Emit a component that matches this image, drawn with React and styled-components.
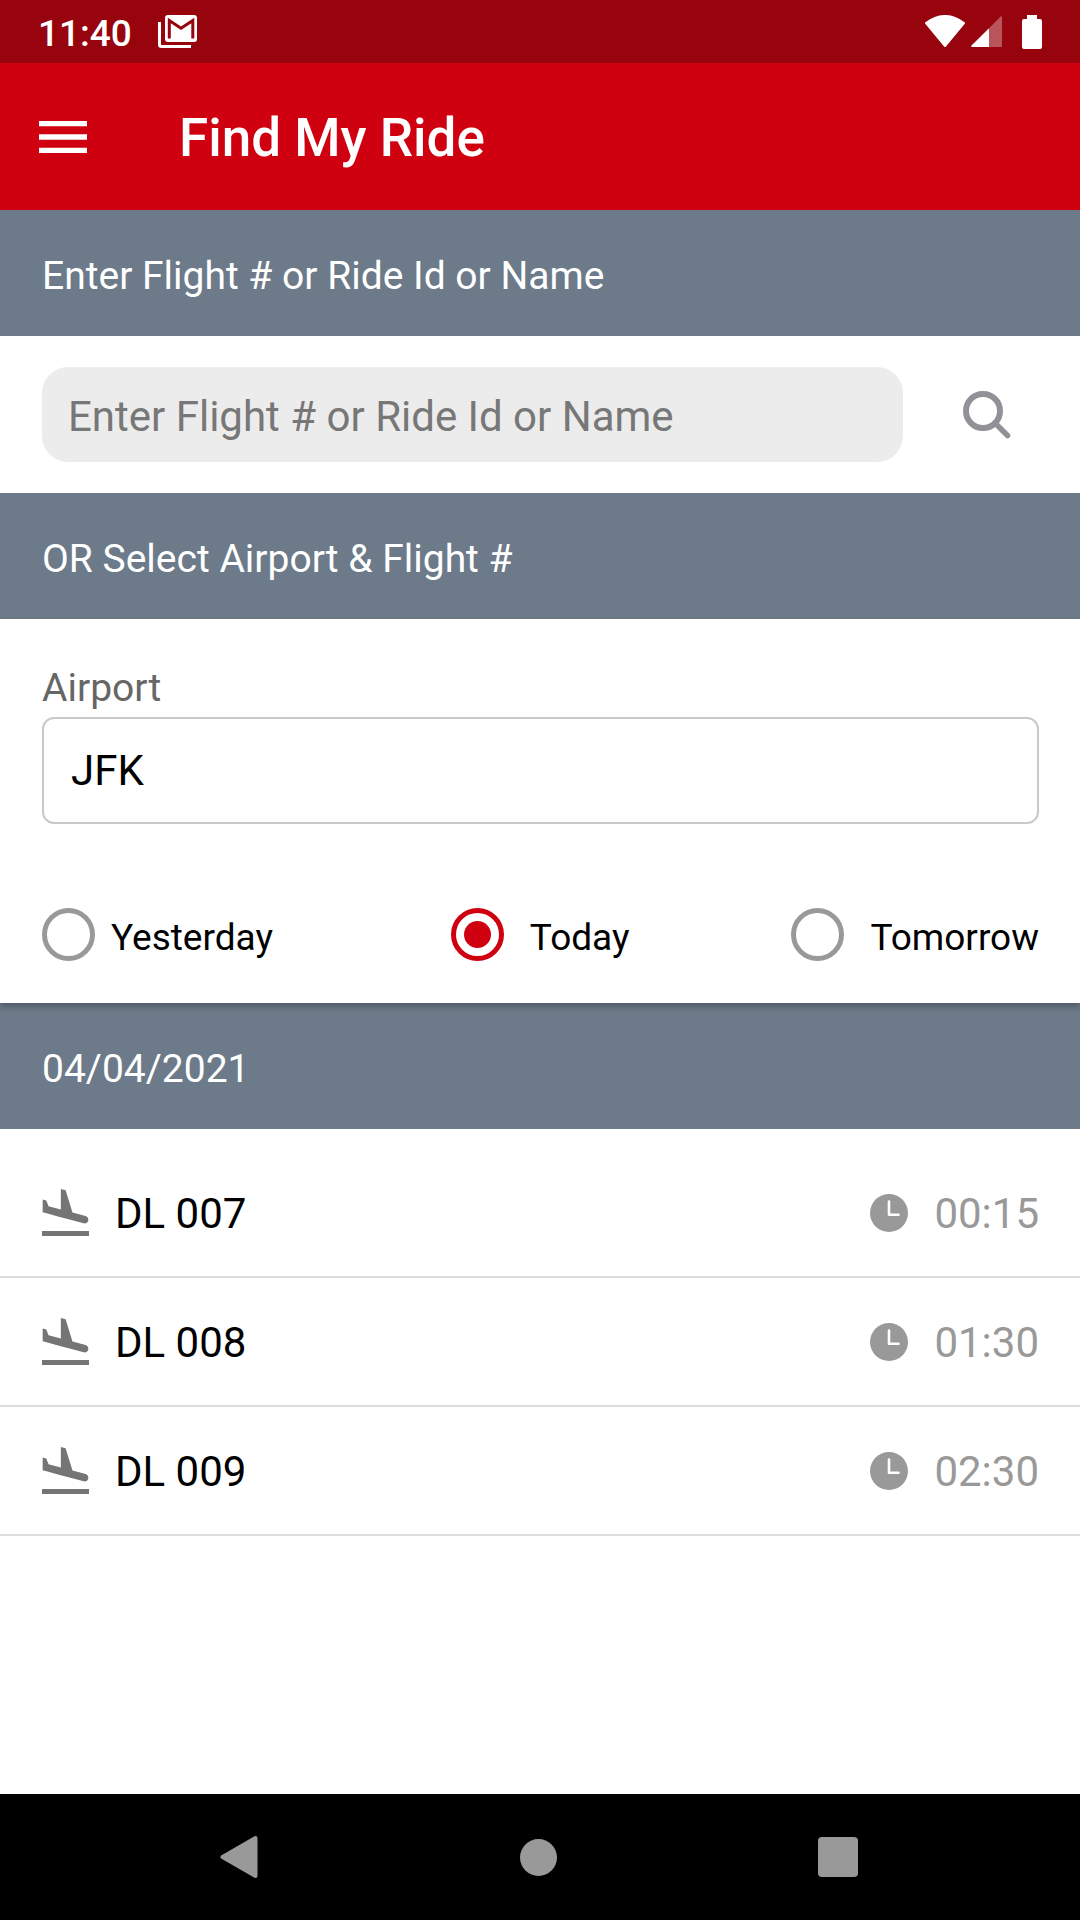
import React, { useState } from 'react';
import styled, { createGlobalStyle } from 'styled-components';

const flights = [
  { id: 1, number: 'DL 007', time: '00:15' },
  { id: 2, number: 'DL 008', time: '01:30' },
  { id: 3, number: 'DL 009', time: '02:30' },
];

const days = ['Yesterday', 'Today', 'Tomorrow'];

const MailIcon = () => (
  <svg width="39" height="33" viewBox="0 0 39 33" fill="none" aria-hidden="true">
    <path d="M1.5 7V29.5Q1.5 31.5 3.5 31.5H33" stroke="#fff" strokeWidth="3" />
    <rect x="7" y="0" width="32" height="27" rx="3" fill="#fff" />
    <path d="M11.3 23.5V5.5L23 13.2L34.8 5.5V23.5" stroke="#98040e" strokeWidth="3" />
  </svg>
);

const WifiIcon = () => (
  <svg width="40" height="33" viewBox="0 0 40 33" aria-hidden="true">
    <path d="M1 8Q20 -6 39 8L20 31Z" fill="#fff" stroke="#fff" strokeWidth="2" strokeLinejoin="round" />
  </svg>
);

const SignalIcon = () => (
  <svg width="31" height="31" viewBox="0 0 31 31" aria-hidden="true">
    <path d="M18 12.3L30 .3Q31 0 31 1V30Q31 31 30 31H18Z" fill="#fff" fillOpacity="0.32" />
    <path d="M18 12.3V31H1Q-.5 30.5 .5 29.5Z" fill="#fff" />
  </svg>
);

const BatteryIcon = () => (
  <svg width="20" height="34" viewBox="0 0 20 34" aria-hidden="true">
    <path d="M5 0H15V4H18Q20 4 20 6V32Q20 34 18 34H2Q0 34 0 32V6Q0 4 2 4H5Z" fill="#fff" />
  </svg>
);

const MenuIcon = () => (
  <svg width="48" height="32" viewBox="3 6 18 12" fill="#fff" aria-hidden="true">
    <path d="M3 18h18v-2H3v2zm0-5h18v-2H3v2zm0-7v2h18V6H3z" />
  </svg>
);

const SearchIcon = () => (
  <svg width="48" height="48" viewBox="0 0 48 48" fill="none" stroke="#919197" aria-hidden="true">
    <circle cx="20" cy="20" r="17" strokeWidth="6" />
    <path d="M32 32L44.5 44.5" strokeWidth="5.5" strokeLinecap="round" />
  </svg>
);

const LandingIcon = () => (
  <svg width="47" height="47" viewBox="2.5 2 19 19" fill="#757575" aria-hidden="true">
    <path d="M2.5 19h19v2h-19zm7.18-5.73l4.35 1.16 5.31 1.42c.8.21 1.62-.26 1.84-1.06.21-.8-.26-1.62-1.06-1.84l-5.31-1.42-2.76-9.02L10.12 2v8.28L5.15 8.95l-.93-2.32-1.45-.39v5.17l1.6.43 5.31 1.43z" />
  </svg>
);

const ClockIcon = () => (
  <svg width="38" height="38" viewBox="0 0 38 38" fill="none" aria-hidden="true">
    <circle cx="19" cy="19" r="19" fill="#999" />
    <path d="M19 7.5V20.8H28.500" stroke="#fff" strokeWidth="2.6" strokeLinejoin="round" strokeLinecap="round" />
  </svg>
);

const App = () => {
  const [query, setQuery] = useState('');
  const [airport, setAirport] = useState('JFK');
  const [day, setDay] = useState('Today');

  return (
    <Screen>
      <GlobalStyle />

      <StatusBar>
        <StatusGroup>
          <Clock>11:40</Clock>
          <MailIcon />
        </StatusGroup>
        <SystemIcons>
          <WifiIcon />
          <SignalIcon />
          <BatteryIcon />
        </SystemIcons>
      </StatusBar>

      <AppBar>
        <IconButton aria-label="Open menu">
          <MenuIcon />
        </IconButton>
        <Title>Find My Ride</Title>
      </AppBar>

      <SectionHeader>Enter Flight # or Ride Id or Name</SectionHeader>
      <SearchRow>
        <SearchInput
          type="text"
          aria-label="Enter Flight # or Ride Id or Name"
          placeholder="Enter Flight # or Ride Id or Name"
          value={query}
          onChange={(e) => setQuery(e.target.value)}
        />
        <SearchButton aria-label="Search">
          <SearchIcon />
        </SearchButton>
      </SearchRow>

      <SectionHeader>OR Select Airport &amp; Flight #</SectionHeader>
      <AirportPanel>
        <FieldLabel htmlFor="airport">Airport</FieldLabel>
        <AirportInput
          id="airport"
          type="text"
          value={airport}
          onChange={(e) => setAirport(e.target.value)}
        />
        <DayOptions role="radiogroup" aria-label="Day">
          {days.map((name) => (
            <DayOption key={name}>
              <Radio
                type="radio"
                name="day"
                value={name}
                checked={day === name}
                onChange={() => setDay(name)}
              />
              <DayName>{name}</DayName>
            </DayOption>
          ))}
        </DayOptions>
      </AirportPanel>

      {/* Flights for the selected day */}
      <SectionHeader>04/04/2021</SectionHeader>
      <FlightList>
        {flights.map((flight) => (
          <FlightRow key={flight.id}>
            <LandingIcon />
            <FlightNumber>{flight.number}</FlightNumber>
            <ClockIcon />
            <FlightTime>{flight.time}</FlightTime>
          </FlightRow>
        ))}
      </FlightList>

      <NavBar>
        <IconButton aria-label="Back">
          <svg width="38" height="44" viewBox="0 0 38 44" aria-hidden="true">
            <path d="M2.5 22L35.5 3V41Z" fill="#999" stroke="#999" strokeWidth="4" strokeLinejoin="round" />
          </svg>
        </IconButton>
        <IconButton aria-label="Home">
          <HomeShape />
        </IconButton>
        <IconButton aria-label="Recent apps">
          <RecentShape />
        </IconButton>
      </NavBar>
    </Screen>
  );
};

// Styled Components
const GlobalStyle = createGlobalStyle`
  * {
    box-sizing: border-box;
  }

  body {
    margin: 0;
    background: #fff;
    font-family: Roboto, sans-serif;
  }

  button, input {
    font-family: inherit;
  }

  svg {
    display: block;
    flex-shrink: 0;
  }
`;

const Screen = styled.div`
  display: flex;
  flex-direction: column;
  min-height: 100vh;
`;

const StatusBar = styled.div`
  display: flex;
  align-items: center;
  justify-content: space-between;
  height: 63px;
  padding: 0 38px;
  background: #98040e;
`;

const StatusGroup = styled.div`
  display: flex;
  align-items: center;
  gap: 26px;
`;

const Clock = styled.span`
  padding-top: 4px;
  color: #fff;
  font-size: 37px;
  font-weight: 500;
`;

const SystemIcons = styled.div`
  display: flex;
  align-items: center;
  gap: 6px;

  svg:last-child {
    margin-left: 14px;
  }
`;

const AppBar = styled.header`
  display: flex;
  align-items: center;
  gap: 88px;
  height: 147px;
  padding: 0 39px;
  background: #cf000f;
`;

const IconButton = styled.button`
  display: flex;
  align-items: center;
  justify-content: center;
  padding: 0;
  border: none;
  background: none;
  cursor: pointer;
`;

const Title = styled.h1`
  margin: 0;
  padding: 2px 4px 0;
  color: #fff;
  font-size: 53px;
  font-weight: 500;
`;

const SectionHeader = styled.h2`
  display: flex;
  align-items: center;
  height: 126px;
  margin: 0;
  padding: 6px 42px 0;
  background: #6c7a89;
  color: #fff;
  font-size: 39px;
  font-weight: 400;
`;

const SearchRow = styled.div`
  display: flex;
  align-items: center;
  height: 157px;
  padding: 0 9px 0 42px;
`;

const SearchInput = styled.input`
  flex: 1;
  min-width: 0;
  height: 95px;
  padding: 4px 26px 0;
  border: none;
  border-radius: 26px;
  background: #ececec;
  color: #000;
  font-size: 42px;

  &::placeholder {
    color: #777;
    opacity: 1;
  }
`;

const SearchButton = styled(IconButton)`
  width: 168px;
  height: 95px;
`;

const AirportPanel = styled.div`
  position: relative;
  display: flex;
  flex-direction: column;
  padding: 42px 41px 42px 42px;
  background: #fff;
  box-shadow: 0 4px 6px rgba(0, 0, 0, 0.25);
`;

const FieldLabel = styled.label`
  margin-bottom: 2px;
  color: #666;
  font-size: 39px;
  line-height: 54px;
`;

const AirportInput = styled.input`
  height: 107px;
  padding: 0 27px;
  border: 2px solid #c9c9c9;
  border-radius: 12px;
  background: #fff;
  color: #000;
  font-size: 42px;
`;

const DayOptions = styled.div`
  display: flex;
  justify-content: space-between;
  margin-top: 84px;
`;

const DayOption = styled.label`
  display: flex;
  align-items: center;
  gap: 26px;
  cursor: pointer;

  &:first-child {
    gap: 16px;
    padding-right: 16px;
  }
`;

const Radio = styled.input`
  appearance: none;
  width: 53px;
  height: 53px;
  margin: 0;
  padding: 8px;
  border: 5px solid #999;
  border-radius: 50%;
  background-clip: content-box;
  cursor: pointer;

  &:checked {
    border-color: #cf000f;
    background-color: #cf000f;
  }
`;

const DayName = styled.span`
  padding-top: 6px;
  color: #000;
  font-size: 37px;
  line-height: 44px;
`;

const FlightList = styled.ul`
  margin: 0;
  padding: 20px 0;
  list-style: none;
`;

const FlightRow = styled.li`
  display: flex;
  align-items: center;
  gap: 26px;
  height: 129px;
  padding: 0 41px 0 42px;
  border-bottom: 2px solid #dcdcdc;
`;

const FlightNumber = styled.span`
  flex: 1;
  padding-top: 2px;
  color: #000;
  font-size: 42px;
`;

const FlightTime = styled.span`
  padding-top: 2px;
  color: #999;
  font-size: 42px;
`;

const NavBar = styled.nav`
  display: grid;
  grid-template-columns: repeat(3, 1fr);
  height: 126px;
  margin-top: auto;
  padding: 0 92px 0 89px;
  background: #000;
`;

const HomeShape = styled.span`
  width: 37px;
  height: 37px;
  border-radius: 50%;
  background: #999;
`;

const RecentShape = styled.span`
  width: 40px;
  height: 40px;
  border-radius: 4px;
  background: #999;
`;

export default App;
